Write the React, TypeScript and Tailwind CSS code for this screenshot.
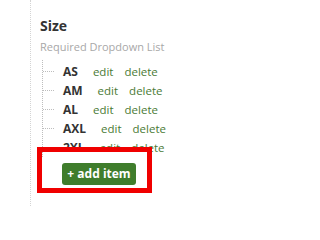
const items = ["AS", "AM", "AL", "AXL", "2XL"];

export default function App() {
  return (
    <div className="relative h-[206px] w-[258px] bg-white font-['Open_Sans',sans-serif]">
      <div className="ml-[30px] h-full border-l border-dotted border-[#d4d4d4] pl-[9px] pt-[16px]">
        <h3 className="text-[14px] font-bold leading-[20px] text-[#333]">Size</h3>
        <p className="mt-[3px] text-[11px] leading-[15px] text-[#a8a8a8]">Required Dropdown List</p>
        <ul className="ml-[2px] mt-[6px] border-l border-dotted border-[#bdbdbd] pt-[2px]">
          {items.map((item) => (
            <li key={item} className="flex h-[19px] items-center">
              <span className="w-[11px] border-t border-dotted border-[#bdbdbd]" />
              <span className="ml-[9px] text-[12px] font-bold text-[#333]">{item}</span>
              <a className="ml-[15px] text-[11.5px] text-[#4a7a35]">edit</a>
              <a className="ml-[11px] text-[11.5px] text-[#4a7a35]">delete</a>
            </li>
          ))}
        </ul>
        <button className="ml-[22px] mt-[6px] h-[22px] w-[74px] rounded-[3px] bg-[#3f7d2c] text-[12px] font-bold text-white">
          + add item
        </button>
      </div>
      <div className="absolute left-[37px] top-[147px] h-[46px] w-[115px] border-[5px] border-[#f00000]" />
    </div>
  );
}
